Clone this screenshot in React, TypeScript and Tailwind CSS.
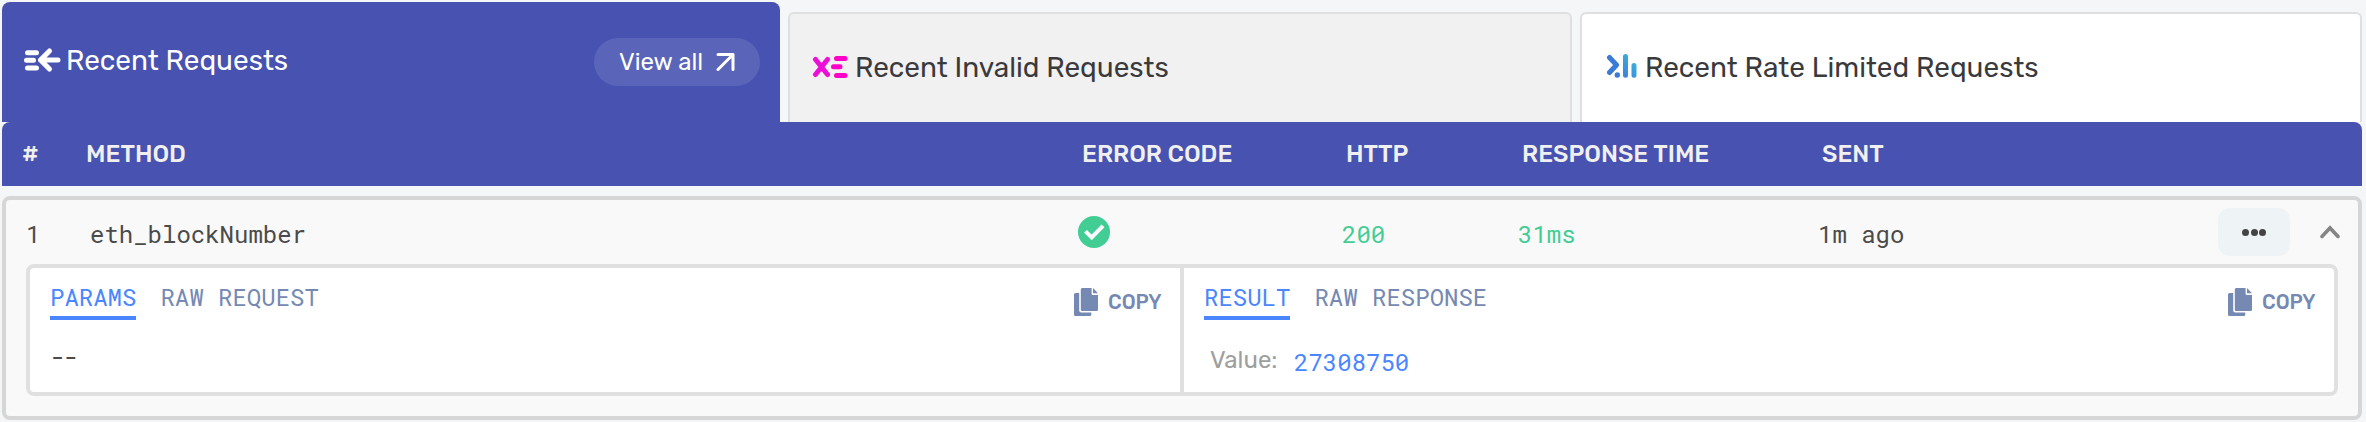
import type { ReactNode } from 'react';

const TabTitle = ({ children, className }: { children: ReactNode; className: string }) => (
  <span className={`whitespace-nowrap text-[28px] leading-[40px] ${className}`}>{children}</span>
);

const RequestsIcon = () => (
  <svg className="h-[26px] w-[38px]" viewBox="0 0 38 26" fill="none" stroke="white" strokeWidth="5" strokeLinecap="round" strokeLinejoin="round">
    <path d="M3.5 5.7H12.5M2.5 13.3H9.5M3.5 21H12.5" />
    <path d="M25.5 4L16.5 13L25.5 22M16.5 13H34" />
  </svg>
);

const InvalidIcon = () => (
  <svg className="h-[24px] w-[36px]" viewBox="0 0 36 24" fill="none" strokeWidth="5" strokeLinecap="round">
    <path d="M3.5 4.5L15.5 19.5M15.5 4.5L3.5 19.5" stroke="#ec0fd8" />
    <path d="M24.5 3.5H33M21.5 11.8H28M24.5 20.5H33" stroke="#ff00c8" />
  </svg>
);

const LimitedIcon = () => (
  <svg className="h-[24px] w-[30px]" viewBox="0 0 30 24" fill="none" strokeWidth="5" strokeLinecap="round" strokeLinejoin="round">
    <defs>
      <linearGradient id="bars" x1="0" y1="24" x2="30" y2="0" gradientUnits="userSpaceOnUse">
        <stop stopColor="#3a70d8" />
        <stop offset="0.45" stopColor="#3a8bdc" />
        <stop offset="1" stopColor="#3bc0dc" />
      </linearGradient>
    </defs>
    <path d="M2.5 3.5L9.5 11L2.5 18.5" stroke="#3a7bd8" />
    <circle cx="10.3" cy="21" r="2.7" fill="#3a7bd8" />
    <path d="M18.5 2.5V21.3M27 11.5V21.3" stroke="url(#bars)" />
  </svg>
);

const CopyButton = () => (
  <div className="mt-[20px] flex h-[28px] items-center">
    <svg className="h-[28px] w-[24px]" viewBox="0 0 24 28" fill="#7589b3">
      <path d="M1.5 5H5.2V22.5Q5.2 24.6 7.3 24.6H17.3V26.5Q17.3 28 15.8 28H1.5Q0 28 0 26.5V6.5Q0 5 1.5 5Z" />
      <path d="M8.2 0H17.6V5.5Q17.6 7 19.1 7H24V21.5Q24 23 22.5 23H8.2Q6.8 23 6.8 21.5V1.5Q6.8 0 8.2 0Z" />
      <path d="M19 0L24 5.2H19Z" />
    </svg>
    <span className="ml-[10px] w-[55px] text-[20px] font-medium leading-[28px] text-[#7589b3]">COPY</span>
  </div>
);

const MONO = "font-['Roboto_Mono','Liberation_Mono',monospace]";

const Panel = ({ tabs, children }: { tabs: [string, string]; children: ReactNode }) => (
  <div className="flex flex-1 justify-between pr-[17px] pl-[20px]">
    <div>
      <div className={`flex gap-[24px] text-[24px] leading-[32px] ${MONO}`}>
        <span className="mt-[13px] h-[39px] border-b-4 border-[#4a86ff] text-[#4a86ff]">{tabs[0]}</span>
        <span className="mt-[13px] text-[#7589b3]">{tabs[1]}</span>
      </div>
      {children}
    </div>
    <CopyButton />
  </div>
);

export default function App() {
  return (
    <div className="h-[422px] w-[2366px] overflow-hidden bg-[#f4f6f8] pt-[2px] pl-[2px] font-['Rubik','Roboto',sans-serif]">
      <div className="flex h-[120px] w-[2360px] items-end">
        <div className="flex h-[120px] w-[778px] items-start rounded-t-[8px] bg-[#4752b1] pl-[22px] text-white">
          <div className="mt-[45px]"><RequestsIcon /></div>
          <TabTitle className="mt-[39px] ml-[4px] w-[528px]">Recent Requests</TabTitle>
          <div className="mt-[36px] flex h-[48px] w-[166px] items-center rounded-full bg-[#5a64b9] pl-[25px]">
            <span className="w-[97px] whitespace-nowrap text-[24px] leading-[32px]">View all</span>
            <svg className="h-[18px] w-[19px]" viewBox="0 0 19 18" fill="none" stroke="white" strokeWidth="3" strokeLinecap="round" strokeLinejoin="round">
              <path d="M2 1.5H17V16.5M17 1.5L2 16.5" />
            </svg>
          </div>
        </div>
        <div className="ml-[8px] flex h-[110px] w-[784px] items-start rounded-t-[6px] border-2 border-b-0 border-[#dedfdf] bg-[#f1f1f1] pl-[22px] text-[#3a3a3c]">
          <div className="mt-[41px]"><InvalidIcon /></div>
          <TabTitle className="mt-[34px] ml-[7px]">Recent Invalid Requests</TabTitle>
        </div>
        <div className="ml-[8px] flex h-[110px] w-[782px] items-start rounded-t-[6px] border-2 border-b-0 border-[#dedfdf] bg-white pl-[25px] text-[#3a3a3c]">
          <div className="mt-[40px]"><LimitedIcon /></div>
          <TabTitle className="mt-[34px] ml-[8px]">Recent Rate Limited Requests</TabTitle>
        </div>
      </div>

      <div className="grid h-[64px] w-[2360px] grid-cols-[64px_996px_264px_176px_300px_1fr] items-center rounded-t-[8px] bg-[#4752b1] pl-[20px] text-[24px] font-medium leading-[32px] text-[#f0f0f0]">
        <span>#</span>
        <span>METHOD</span>
        <span>ERROR CODE</span>
        <span>HTTP</span>
        <span>RESPONSE TIME</span>
        <span>SENT</span>
      </div>

      <div className="mt-[10px] h-[224px] w-[2360px] rounded-[8px] border-4 border-[#d6d6d6] bg-[#f9f9f9]">
        <div className={`flex h-[64px] items-center text-[24px] leading-[32px] text-[#4b4b4b] ${MONO}`}>
          <span className="w-[84px] pt-[4px] pl-[20px]">1</span>
          <span className="w-[988px] pt-[4px]">eth_blockNumber</span>
          <svg className="h-[32px] w-[32px]" viewBox="0 0 32 32">
            <circle cx="16" cy="16" r="16" fill="#42cd95" />
            <path d="M7.5 15.4L13.7 21.4L25 9.8" fill="none" stroke="white" strokeWidth="4" />
          </svg>
          <span className="ml-[232px] w-[176px] pt-[4px] text-[#42cd95]">200</span>
          <span className="w-[300px] pt-[4px] text-[#42cd95]">31ms</span>
          <span className="w-[400px] pt-[4px]">1m ago</span>
          <div className="flex h-[48px] w-[72px] items-center justify-center gap-[1.5px] rounded-[12px] bg-[#eef3f5]">
            <i className="h-[7px] w-[7px] rounded-full bg-[#444]" />
            <i className="h-[7px] w-[7px] rounded-full bg-[#444]" />
            <i className="h-[7px] w-[7px] rounded-full bg-[#444]" />
          </div>
          <svg className="ml-[30px] h-[14px] w-[20px]" viewBox="0 0 20 14" fill="none" stroke="#858585" strokeWidth="3.6" strokeLinecap="round">
            <path d="M2 11.5L10 3L18 11.5" />
          </svg>
        </div>

        <div className="ml-[20px] flex h-[132px] w-[2312px] rounded-[8px] border-4 border-[#e0e0e0] bg-white">
          <Panel tabs={['PARAMS', 'RAW REQUEST']}>
            <div className={`mt-[21px] pl-[0.5px] text-[22px] font-medium leading-[32px] text-[#4b4b4b] ${MONO}`}>--</div>
          </Panel>
          <div className="w-[4px] bg-[#e0e0e0]" />
          <Panel tabs={['RESULT', 'RAW RESPONSE']}>
            <div className="mt-[24px] flex pl-[6px] leading-[32px]">
              <span className="w-[84px] text-[24px] text-[#9e9e9e]">Value:</span>
              <span className={`mt-[2px] text-[24px] text-[#4a86ff] ${MONO}`}>27308750</span>
            </div>
          </Panel>
        </div>
      </div>
    </div>
  );
}
